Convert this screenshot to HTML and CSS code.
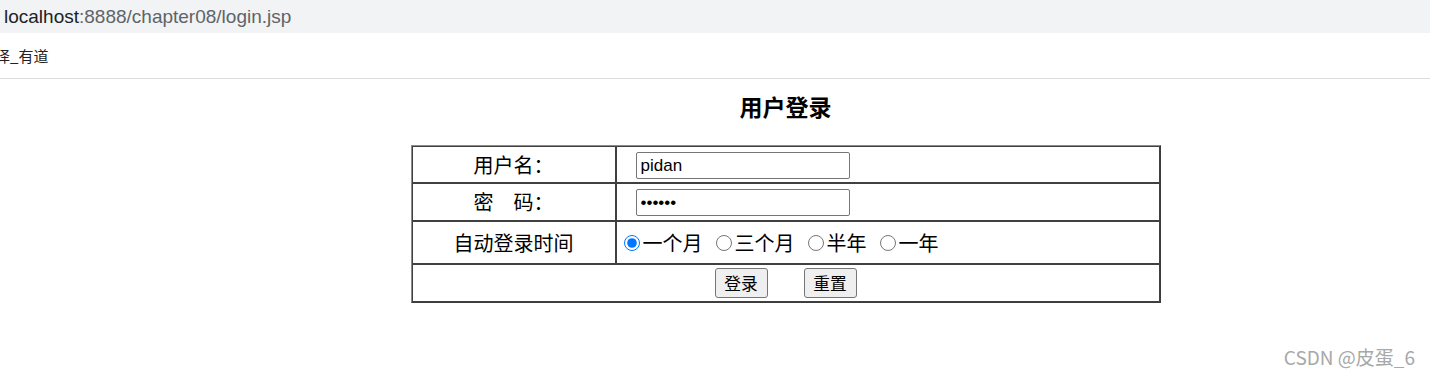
FILE: index.html
```html
<!DOCTYPE html>
<html>
<head>
<meta charset="utf-8">
<title>用户登录</title>
<link rel="stylesheet" href="styles.css">
</head>
<body>

<div class="addr"><span class="host">localhost</span>:8888/chapter08/login.jsp</div>
<div class="marks"><span class="mark">译_有道</span></div>

<div class="page">
	<h3>用户登录</h3>
	<form action="login.jsp" method="post">
	<table class="login">
		<tr class="r1">
			<td class="lbl">用户名：</td>
			<td class="fld"><input type="text" name="username" value="pidan" /></td>
		</tr>
		<tr class="r2">
			<td class="lbl">密　码：</td>
			<td class="fld"><input type="password" name="password" value="123456" /></td>
		</tr>
		<tr class="r3">
			<td class="lbl">自动登录时间</td>
			<td class="opts">
				<div class="radios">
					<label><input type="radio" name="autologin" value="30" checked />一个月</label>
					<label><input type="radio" name="autologin" value="90" />三个月</label>
					<label><input type="radio" name="autologin" value="180" />半年</label>
					<label><input type="radio" name="autologin" value="365" />一年</label>
				</div>
			</td>
		</tr>
		<tr class="r4">
			<td colspan="2" class="btns">
				<div class="btnrow">
					<input type="submit" value="登录" class="btn" />
					<input type="reset" value="重置" class="btn" />
				</div>
			</td>
		</tr>
	</table>
	</form>
</div>

<div class="wm">CSDN @皮蛋_6</div>

</body>
</html>
```

FILE: styles.css
```css
*{margin:0;padding:0;box-sizing:border-box;}
html,body{overflow:hidden;}
body{font-family:"Noto Sans CJK SC",sans-serif;background:#fff;color:#000;}

.addr{height:33px;background:#f1f3f4;padding-left:4px;font:19px/33px "Liberation Sans",Arial,sans-serif;color:#5f6368;}
.addr .host{color:#202124;}
.marks{height:46px;border-bottom:1px solid #dadce0;font-size:15px;line-height:45px;color:#222;}
.mark{margin-left:-5px;}

.page{width:1571px;text-align:center;}
.page h3{font-size:23px;line-height:30px;padding-top:12px;font-weight:700;}

.login{width:750px;margin:24px auto 0;border-collapse:separate;border-spacing:0;border:1px solid;border-color:#8c8c8c #3c3c3c #3c3c3c #8c8c8c;font-size:20px;line-height:24px;}
.login td{border:1px solid #404040;}
.login .r1 td{height:37px;}
.login .r2 td{height:38px;}
.login .r3 td{height:43px;}
.login .r4 td{height:38px;}
.lbl{width:204px;text-align:center;vertical-align:middle;}
.fld{text-align:left;vertical-align:top;padding:5px 0 0 19px;}
.fld input{display:block;width:214px;height:27px;border:1px solid #767676;border-radius:2px;padding:0 4px;font:17px "Liberation Sans",Arial,sans-serif;color:#000;background:#fff;}

.opts{text-align:left;vertical-align:middle;}
.radios{display:flex;align-items:center;gap:6px;}
.radios label{display:flex;align-items:center;}
.radios input{width:16px;height:16px;margin:0 3px 0 7px;accent-color:#0075ff;}

.btns{vertical-align:middle;}
.btnrow{display:flex;justify-content:center;gap:36px;}
.btn{width:53px;height:30px;border:1px solid #767676;border-radius:3px;background:#efefef;font:16.7px "Noto Sans CJK SC",sans-serif;color:#000;}

.wm{position:absolute;right:15px;top:343px;font:19px "Noto Sans CJK SC",sans-serif;color:#a8a8a8;}
```
